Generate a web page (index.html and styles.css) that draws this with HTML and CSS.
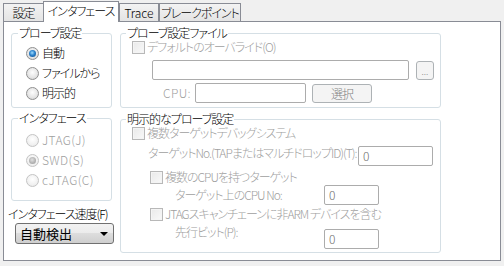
FILE: index.html
```html
<!DOCTYPE html>
<html lang="ja">
<head>
    <meta charset="UTF-8">
    <title>インタフェース</title>
    <link rel="stylesheet" href="styles.css">
</head>
<body>
    <div class="tabs">
        <div class="tab tab-settings">設定</div>
        <div class="tab tab-active">インタフェース</div>
        <div class="tab tab-trace latin">Trace</div>
        <div class="tab tab-break">ブレークポイント</div>
    </div>

    <div class="panel">
        <div class="col-left">
            <fieldset class="group group-probe">
                <legend>プローブ設定</legend>
                <div class="opt"><span class="radio checked"></span>自動</div>
                <div class="opt"><span class="radio"></span>ファイルから</div>
                <div class="opt"><span class="radio"></span>明示的</div>
            </fieldset>

            <fieldset class="group group-if">
                <legend>インタフェース</legend>
                <div class="opt off latin"><span class="radio"></span>JTAG(J)</div>
                <div class="opt off latin"><span class="radio checked"></span>SWD(S)</div>
                <div class="opt off latin"><span class="radio"></span>cJTAG(C)</div>
            </fieldset>

            <div class="speed-label">インタフェース速度(F)</div>
            <div class="combo">
                <span>自動検出</span>
                <span class="arrow"></span>
            </div>
        </div>

        <div class="col-right">
            <fieldset class="group group-file">
                <legend>プローブ設定ファイル</legend>
                <div class="chk-row off"><span class="check"></span>デフォルトのオーバライド(O)</div>
                <div class="row row-file">
                    <div class="edit edit-file"></div>
                    <div class="btn btn-dots">...</div>
                </div>
                <div class="row row-cpu">
                    <span class="lbl lbl-cpu off latin">CPU:</span>
                    <div class="edit edit-cpu"></div>
                    <div class="btn btn-select">選択</div>
                </div>
            </fieldset>

            <fieldset class="group group-explicit">
                <legend>明示的なプローブ設定</legend>
                <div class="chk-row off"><span class="check"></span>複数ターゲットデバッグシステム</div>
                <div class="row row-target">
                    <span class="lbl lbl-target off">ターゲットNo.(TAPまたはマルチドロップID)(T):</span>
                    <div class="edit edit-num edit-target">0</div>
                </div>
                <div class="chk-row chk-sub chk-multi off"><span class="check"></span>複数のCPUを持つターゲット</div>
                <div class="row row-sub row-cpuno">
                    <span class="lbl lbl-sub off">ターゲット上のCPU No:</span>
                    <div class="edit edit-num edit-small">0</div>
                </div>
                <div class="chk-row chk-sub chk-jtag off"><span class="check"></span>JTAGスキャンチェーンに非ARM デバイスを含む</div>
                <div class="row row-sub row-bits">
                    <span class="lbl lbl-sub off">先行ビット(P):</span>
                    <div class="edit edit-num edit-small">0</div>
                </div>
            </fieldset>
        </div>
    </div>
</body>
</html>
```

FILE: styles.css
```css
* {
    box-sizing: border-box;
}

body {
    margin: 0;
    background: #f0f0f0;
    font-family: "Noto Sans CJK JP", "Noto Sans", sans-serif;
    font-size: 12px;
    font-weight: 300;
    font-feature-settings: "palt";
    letter-spacing: -1px;
    line-height: 14px;
    color: #000;
}

.latin {
    letter-spacing: 0.4px;
}

.off {
    color: #a0a0a0;
}

/* tabs */
.tabs {
    display: flex;
    align-items: flex-end;
    height: 21px;
    padding-left: 3px;
}

.tab {
    height: 18px;
    padding-top: 2px;
    text-align: center;
    border: 1px solid #898c95;
    border-bottom: none;
    background: linear-gradient(#f3f3f3, #e4e4e4);
}

.tab-settings {
    width: 41px;
}

.tab-active {
    position: relative;
    z-index: 1;
    width: 76px;
    height: 21px;
    margin-left: -1px;
    margin-bottom: -1px;
    padding-top: 2px;
    background: #fff;
}

.tab-trace {
    width: 40px;
    letter-spacing: 0;
}

.tab-break {
    width: 82px;
}

/* panel */
.panel {
    display: flex;
    gap: 8px;
    height: 240px;
    margin: 0 3px;
    padding: 4px 0 0 7px;
    border: 1px solid #898c95;
    background: #fff;
}

.col-left {
    display: flex;
    flex-direction: column;
    width: 101px;
}

.col-right {
    display: flex;
    flex-direction: column;
    width: 321px;
}

.group {
    margin: 0;
    min-width: 0;
    border: 1px solid #d5dfe5;
    border-radius: 3px;
}

.group legend {
    padding: 0 1px;
    line-height: 14px;
}

.group-probe {
    padding: 3px 0 4px 14px;
}

.group-if {
    margin-top: 3px;
    padding: 5px 0 10px 14px;
}

.group-probe legend,
.group-if legend {
    margin-left: -8px;
}

.group-file {
    padding: 0 0 4px 11px;
}

.group-explicit {
    margin-top: 4px;
    padding: 0 7px 3px 11px;
}

.group-file legend,
.group-explicit legend {
    margin-left: -6px;
}

/* radio buttons */
.opt {
    display: flex;
    align-items: center;
    height: 20px;
}

.radio {
    position: relative;
    flex: none;
    width: 13px;
    height: 13px;
    margin-right: 3px;
    border: 1px solid #8f8f8f;
    border-radius: 50%;
    background: radial-gradient(circle at 50% 40%, #fdfdfd 0, #e6e6e6 55%, #cfcfcf 100%);
}

.radio.checked::after {
    content: '';
    position: absolute;
    left: 2px;
    top: 2px;
    width: 7px;
    height: 7px;
    border-radius: 50%;
    background: radial-gradient(circle at 45% 40%, #9fdcff 0, #2b82cc 45%, #0f4a86 100%);
}

.off .radio {
    border-color: #c4c4c4;
    background: radial-gradient(circle at 50% 40%, #ffffff 0, #f1f1f1 60%, #e4e4e4 100%);
}

.off .radio.checked::after {
    background: radial-gradient(circle at 45% 40%, #e0e0e0 0, #b0b0b0 60%, #9a9a9a 100%);
}

/* checkboxes */
.chk-row {
    display: flex;
    align-items: center;
    height: 14px;
}

.check {
    flex: none;
    width: 13px;
    height: 13px;
    margin-right: 2px;
    border: 1px solid #b8b8b8;
    background: linear-gradient(135deg, #e9e9e9, #f9f9f9);
    box-shadow: inset 0 0 0 1px #f4f4f4;
}

.chk-sub {
    padding-left: 18px;
}

.chk-multi {
    margin-top: 4px;
}

.chk-jtag {
    margin-top: 2px;
}

/* edits and buttons */
.row {
    display: flex;
    align-items: center;
    height: 20px;
}

.edit {
    height: 20px;
    border: 1px solid #acacac;
    border-radius: 2px;
    background: #fff;
}

.edit-num {
    padding: 2px 0 0 4px;
    color: #6d6d6d;
}

.btn {
    height: 19px;
    border: 1px solid #adb2b5;
    border-radius: 3px;
    background: #f4f4f4;
    color: #838383;
    text-align: center;
    line-height: 17px;
}

.row-file {
    margin-top: 6px;
    padding-left: 20px;
}

.edit-file {
    width: 257px;
}

.btn-dots {
    width: 18px;
    margin-left: 7px;
    font-size: 9px;
    letter-spacing: 0;
    line-height: 20px;
}

.row-cpu {
    margin-top: 3px;
    padding-left: 31px;
}

.lbl-cpu {
    width: 32px;
}

.edit-cpu {
    width: 111px;
}

.btn-select {
    width: 60px;
    margin-left: 6px;
}

.row-target {
    align-items: flex-start;
    margin-top: 6px;
    padding-left: 16px;
}

.lbl-target {
    white-space: nowrap;
}

.edit-target {
    width: 75px;
    margin-left: auto;
}

.row-sub {
    padding-left: 43px;
}

.row-cpuno {
    margin-top: 1px;
}

.row-bits {
    align-items: flex-start;
    margin-top: 8px;
}

.row-bits .lbl-sub {
    margin-top: -4px;
}

.lbl-sub {
    width: 149px;
}

.edit-small {
    width: 55px;
}

/* interface speed */
.speed-label {
    margin: 6px 0 0 -3px;
    white-space: nowrap;
}

.combo {
    display: flex;
    align-items: center;
    justify-content: space-between;
    width: 99px;
    height: 21px;
    margin: 2px 0 0 4px;
    padding: 0 5px 0 4px;
    border: 1px solid #707070;
    border-radius: 3px;
    background: linear-gradient(#f2f2f2 0, #ebebeb 50%, #dddddd 50%, #cfcfcf 100%);
    font-size: 13px;
    font-weight: 400;
    letter-spacing: 0;
}

.arrow {
    width: 0;
    height: 0;
    border-left: 4px solid transparent;
    border-right: 4px solid transparent;
    border-top: 4px solid #000;
}
```
